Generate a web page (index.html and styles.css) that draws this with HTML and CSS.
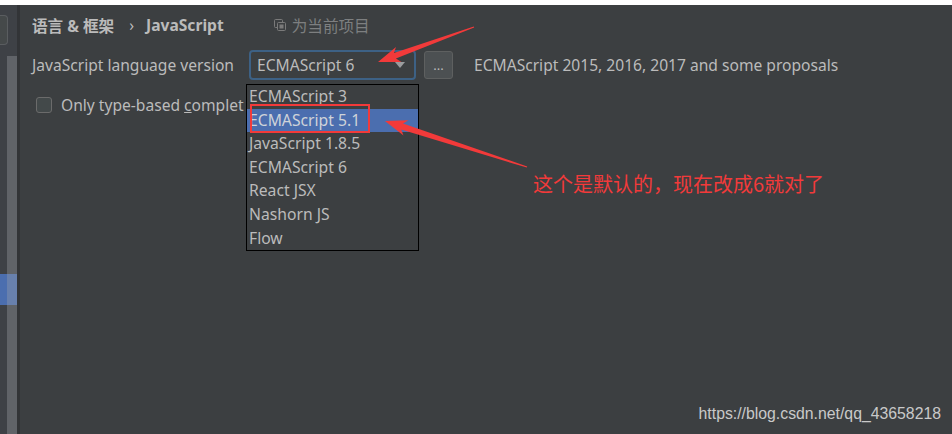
FILE: index.html
```html
<!DOCTYPE html>
<html lang="zh-CN">
<head>
<meta charset="utf-8">
<title>JavaScript</title>
<link rel="stylesheet" href="styles.css">
</head>
<body>
<div class="screen">
  <div class="topstrip"></div>
  <div class="window">
    <aside class="sidebar">
      <div class="search"></div>
      <div class="nav">
        <div class="nav-selected"></div>
      </div>
      <div class="scrollbar"></div>
    </aside>
    <div class="divider"></div>
    <main class="main">
      <div class="crumbs">
        <span class="crumb">语言 &amp; 框架</span>
        <span class="sep">›</span>
        <span class="crumb">JavaScript</span>
        <span class="scope">
          <svg class="scope-icon" width="12" height="12" viewBox="0 0 12 12"><rect x="0.5" y="0.5" width="8" height="8" rx="1" fill="none" stroke="#7a7a7a"/><rect x="3.5" y="3.5" width="8" height="8" rx="1" fill="#3c3f41" stroke="#7a7a7a"/><rect x="5.5" y="5.5" width="4" height="4" fill="#7a7a7a"/></svg>
          为当前项目
        </span>
      </div>
      <div class="row">
        <label class="label">JavaScript language version</label>
        <div class="combo">
          <span class="combo-text">ECMAScript 6</span>
          <span class="combo-arrow"></span>
        </div>
        <button class="dots">...</button>
        <span class="desc">ECMAScript 2015, 2016, 2017 and some proposals</span>
      </div>
      <div class="check-row">
        <span class="checkbox"></span>
        <span class="check-label">Only type-based <u>c</u>omplet</span>
      </div>
    </main>
  </div>

  <ul class="popup">
    <li class="item">ECMAScript 3</li>
    <li class="item selected">ECMAScript 5.1</li>
    <li class="item">JavaScript 1.8.5</li>
    <li class="item">ECMAScript 6</li>
    <li class="item">React JSX</li>
    <li class="item">Nashorn JS</li>
    <li class="item">Flow</li>
  </ul>

  <div class="mark-box"></div>
  <svg class="arrows" width="952" height="434" viewBox="0 0 952 434">
    <polygon fill="#f23a3a" points="378,62 401.4,62 395.9,58.6 474.2,27.5 473.8,26.5 393.9,53 396,47"/>
    <polygon fill="#f23a3a" points="385,121 403.5,135.4 401.2,129.4 526.8,167.6 527.2,166.4 403,123.6 408.4,120.2"/>
  </svg>
  <div class="note">这个是默认的，现在改成6就对了</div>
  <div class="watermark">https://blog.csdn.net/qq_43658218</div>
</div>
</body>
</html>
```
FILE: styles.css
```css
* { box-sizing: border-box; }
html, body { margin: 0; padding: 0; }
body {
  width: 952px;
  height: 434px;
  overflow: hidden;
  background: #3c3f41;
  font-family: "Noto Sans", "Noto Sans CJK SC", sans-serif;
  color: #bbbbbb;
}
.screen {
  position: relative;
  width: 952px;
  height: 434px;
  display: flex;
  flex-direction: column;
}
.topstrip {
  height: 5px;
  background: #ffffff;
  flex: none;
}
.window {
  flex: 1;
  display: flex;
}
.sidebar {
  position: relative;
  width: 17px;
  background: #3e4146;
  display: flex;
  flex-direction: column;
}
.search {
  margin-top: 10px;
  width: 8px;
  height: 30px;
  border: 1px solid #5a5d60;
  border-left: none;
  border-radius: 0 4px 4px 0;
  background: #45494a;
}
.nav {
  flex: 1;
  padding-top: 229px;
}
.nav-selected {
  height: 31px;
  background: #4b6eaf;
}
.scrollbar {
  position: absolute;
  left: 7px;
  top: 51px;
  bottom: 0;
  width: 10px;
  background: rgba(160, 163, 168, 0.35);
}
.divider {
  width: 3px;
  background: #323437;
}
.main {
  flex: 1;
  padding: 9px 0 0 12px;
  font-size: 15.6px;
}
.crumbs {
  display: flex;
  align-items: center;
  height: 22px;
  font-weight: bold;
  color: #bbbbbb;
}
.sep {
  font-weight: normal;
  margin: 0 12px 0 15px;
}
.scope {
  display: flex;
  align-items: center;
  margin-left: 50px;
  font-weight: normal;
  color: #7d7f80;
}
.scope-icon { margin-right: 6px; }
.row {
  display: flex;
  align-items: center;
  height: 30px;
  margin-top: 14px;
}
.label {
  width: 217px;
  flex: none;
}
.combo {
  width: 167px;
  height: 30px;
  border: 2px solid #3d6185;
  border-radius: 4px;
  background: #3c3f41;
  display: flex;
  align-items: center;
  padding-left: 6px;
  position: relative;
}
.combo-text { flex: 1; }
.combo-arrow {
  width: 0;
  height: 0;
  border-left: 5px solid transparent;
  border-right: 5px solid transparent;
  border-top: 6px solid #9a9c9e;
  margin-right: 9px;
}
.dots {
  margin-left: 8px;
  width: 29px;
  height: 28px;
  border: 1px solid #5e6060;
  border-radius: 3px;
  background: #4c5052;
  color: #bbbbbb;
  font-family: inherit;
  font-size: 13px;
  padding: 0;
  line-height: 24px;
}
.desc { margin-left: 21px; }
.check-row {
  display: flex;
  align-items: center;
  height: 22px;
  margin-top: 14px;
  padding-left: 4px;
}
.checkbox {
  flex: none;
  width: 16px;
  height: 16px;
  border: 1px solid #6b6b6b;
  border-radius: 3px;
  background: #43494a;
  margin-right: 9px;
}
.check-label {
  white-space: nowrap;
}
.popup {
  position: absolute;
  left: 246px;
  top: 84px;
  width: 173px;
  height: 167px;
  margin: 0;
  padding: 0;
  list-style: none;
  border: 1px solid #000000;
  background: #3c3f41;
  font-size: 15.7px;
  overflow: hidden;
}
.item {
  height: 23.6px;
  line-height: 23.6px;
  padding-left: 2px;
  white-space: nowrap;
}
.item.selected {
  background: #4b6eaf;
  color: #cfd3d9;
}
.mark-box {
  position: absolute;
  left: 250px;
  top: 104px;
  width: 120px;
  height: 29px;
  border: 2px solid #f23a3a;
}
.arrows {
  position: absolute;
  left: 0;
  top: 0;
}
.note {
  position: absolute;
  left: 533px;
  top: 171px;
  font-size: 20px;
  line-height: 26px;
  color: #f23a3a;
  font-family: "Noto Sans CJK SC", sans-serif;
}
.watermark {
  position: absolute;
  right: 11px;
  top: 404px;
  font-family: "Liberation Sans", Arial, sans-serif;
  font-size: 15.8px;
  line-height: 20px;
  color: #c9c9c9;
}
```
